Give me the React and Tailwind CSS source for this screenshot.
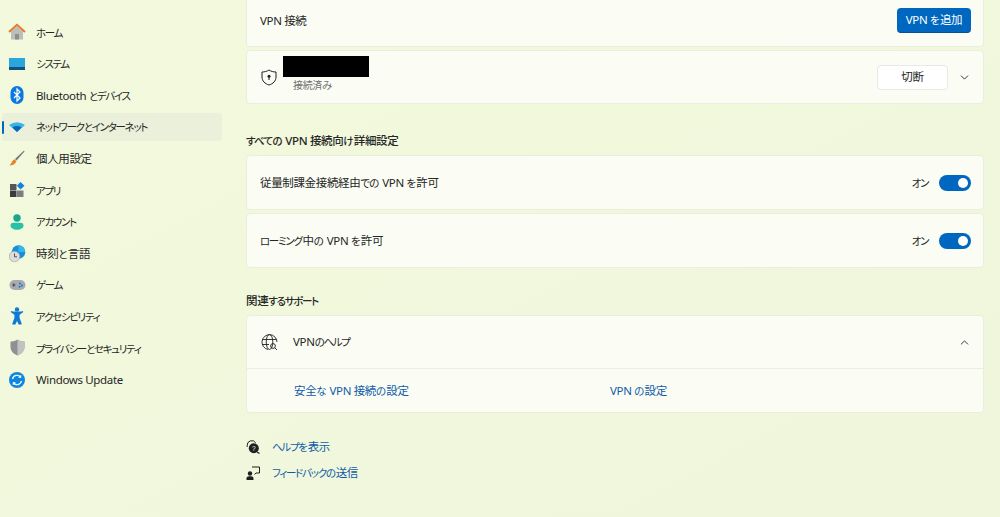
import { ChevronDown, ChevronUp } from 'lucide-react'

const HomeIcon = () => (
  <svg width="18" height="18" viewBox="0 0 18 18">
    <path d="M3 8.5V16.5H15V8.5L9 3.5Z" fill="#bdbdba" />
    <rect x="7" y="11" width="4" height="5.5" fill="#8d8d8a" />
    <path d="M1 9L9 1.8L17 9" fill="none" stroke="#e8792b" strokeWidth="2" />
  </svg>
)
const SystemIcon = () => (
  <svg width="16" height="12" viewBox="0 0 16 12">
    <rect width="16" height="9" y="0" fill="#2aa6dc" />
    <rect width="16" height="3" y="9" fill="#11507f" />
  </svg>
)
const BluetoothIcon = () => (
  <svg width="14" height="18" viewBox="0 0 14 18">
    <rect width="13" height="18" x="0.5" rx="6.5" fill="#0a78e0" />
    <path d="M4 6L10 12L7 15V3L10 6L4 12" fill="none" stroke="#fff" strokeWidth="1.2" />
  </svg>
)
const WifiIcon = () => (
  <svg width="16" height="10" viewBox="0 0 16 10">
    <path d="M0 3Q8 -2.5 16 3L8 10Z" fill="#35b4ea" />
    <path d="M3.4 5.4Q8 2.6 12.6 5.4L8 10Z" fill="#0a64b8" />
  </svg>
)
const BrushIcon = () => (
  <svg width="16" height="16" viewBox="0 0 16 16">
    <path d="M15 0.5L6 9L7.5 10.5L15.5 1.5Z" fill="#77777a" />
    <path d="M5.5 9.3L7.5 11.2C6.5 14 3.5 15.5 0.5 15.5C2.5 14 2.5 11 5.5 9.3Z" fill="#ee8022" />
  </svg>
)
const AppsIcon = () => (
  <svg width="15" height="15" viewBox="0 0 15 15">
    <rect x="0" y="2" width="6.5" height="6" fill="#54565a" />
    <rect x="0" y="8.5" width="6.5" height="6.5" fill="#3a3b3e" />
    <rect x="7" y="8.5" width="6.5" height="6.5" fill="#7b7d80" />
    <path d="M10.5 0L14.5 3.8L10.5 7.6L6.8 3.8Z" fill="#1282de" />
  </svg>
)
const AccountIcon = () => (
  <svg width="14" height="16" viewBox="0 0 14 16">
    <circle cx="7" cy="4" r="3.7" fill="#16a78f" />
    <path d="M0.5 11.5C0.5 9.5 2 8.8 3.5 8.8H10.5C12 8.8 13.5 9.5 13.5 11.5C13.5 14 10.5 15.8 7 15.8C3.5 15.8 0.5 14 0.5 11.5Z" fill="#27c2a6" />
  </svg>
)
const TimeIcon = () => (
  <svg width="17" height="17" viewBox="0 0 17 17">
    <circle cx="9.5" cy="7" r="6.8" fill="#1590d8" />
    <path d="M9.5 0.2A6.8 6.8 0 0 1 16.3 7H9.5Z" fill="#38b6e8" />
    <circle cx="5.5" cy="11.5" r="5.3" fill="#dcdcdc" stroke="#9a9a9a" strokeWidth="0.6" />
    <path d="M5.5 8.5V11.8H8" fill="none" stroke="#444" strokeWidth="0.9" />
  </svg>
)
const GameIcon = () => (
  <svg width="17" height="12" viewBox="0 0 17 12">
    <rect x="0.5" y="1" width="16" height="10" rx="5" fill="#a9abb1" />
    <path d="M3.2 6H6.4M4.8 4.4V7.6" stroke="#3f4145" strokeWidth="1" />
    <circle cx="11" cy="4.4" r="1" fill="#1478d4" />
    <circle cx="13" cy="6.6" r="1" fill="#1478d4" />
    <circle cx="10.6" cy="7.8" r="1" fill="#1478d4" />
  </svg>
)
const AccessIcon = () => (
  <svg width="14" height="18" viewBox="0 0 14 18">
    <circle cx="7" cy="2.4" r="2.2" fill="#0f7ad6" />
    <path d="M1 4.5L5 7.5V11L2.8 17H5L7 12.6L9 17H11.2L9 11V7.5L13 4.5" fill="#0f7ad6" stroke="#0f7ad6" strokeWidth="1.1" strokeLinejoin="round" />
  </svg>
)
const ShieldIcon = () => (
  <svg width="15" height="17" viewBox="0 0 15 17">
    <path d="M7.5 0.5C9.5 2 12 2.6 14.5 2.6V8C14.5 12 11.5 15 7.5 16.5C3.5 15 0.5 12 0.5 8V2.6C3 2.6 5.5 2 7.5 0.5Z" fill="#8e9094" />
    <path d="M7.5 0.5C9.5 2 12 2.6 14.5 2.6V8C14.5 12 11.5 15 7.5 16.5Z" fill="#c0c2c4" />
  </svg>
)
const UpdateIcon = () => (
  <svg width="16" height="16" viewBox="0 0 16 16">
    <circle cx="8" cy="8" r="8" fill="#0f86e0" />
    <path d="M3.6 7A4.5 4.5 0 0 1 11.5 5M12.4 9A4.5 4.5 0 0 1 4.5 11" fill="none" stroke="#fff" strokeWidth="1.3" />
    <path d="M12.2 2.8V5.8H9.2ZM3.8 13.2V10.2H6.8Z" fill="#fff" />
  </svg>
)
const VpnShield = () => (
  <svg width="16" height="17" viewBox="0 0 16 17" fill="none" stroke="#1f1f1f" strokeWidth="1">
    <path d="M8 1C10 2.4 12.5 3 15 3V8C15 12 12 14.8 8 16C4 14.8 1 12 1 8V3C3.5 3 6 2.4 8 1Z" />
    <circle cx="8" cy="7.2" r="1.5" fill="#1f1f1f" stroke="none" />
    <path d="M8 8V11" />
  </svg>
)
const GlobeSearch = () => (
  <svg width="17" height="17" viewBox="0 0 17 17" fill="none" stroke="#1f1f1f" strokeWidth="0.9">
    <path d="M7 15.5A7.5 7.5 0 1 1 16 8" />
    <ellipse cx="8.5" cy="8" rx="3.3" ry="7.5" />
    <path d="M1.5 5.5H15.5M1 10.5H8" />
    <circle cx="12" cy="12" r="2.4" />
    <path d="M13.8 13.8L16 16" />
  </svg>
)
const HelpIcon = () => (
  <svg width="14" height="14" viewBox="0 0 14 14">
    <path d="M1.2 7V5.5A4.6 4.6 0 0 1 9.8 3" fill="none" stroke="#1f1f1f" strokeWidth="1" />
    <circle cx="7.8" cy="8.3" r="5" fill="#1f1f1f" />
    <path d="M11 12L13.5 13.5" stroke="#1f1f1f" strokeWidth="1.2" />
    <text x="7.8" y="10.7" fontSize="6.5" fill="#fff" textAnchor="middle" fontFamily="Liberation Sans">?</text>
  </svg>
)
const FeedbackIcon = () => (
  <svg width="14" height="14" viewBox="0 0 14 14">
    <path d="M6 1H13.5V7H10L8.5 8.5" fill="none" stroke="#1f1f1f" strokeWidth="1" />
    <circle cx="4" cy="7.5" r="2.2" fill="#1f1f1f" />
    <path d="M0.5 14V12.5C0.5 11 1.6 10.3 3 10.3H5C6.4 10.3 7.5 11 7.5 12.5V14Z" fill="#1f1f1f" />
  </svg>
)

// kana in the reference is far narrower than Noto's, so squeeze those runs only
function Jp({ children }) {
  const parts = children.split(/([\u3040-\u30ff]+)/)
  return (
    <>
      {parts.map((p, i) => {
        if (/[\u30a0-\u30ff]/.test(p)) return <span key={i} className="text-[10.5px] tracking-[-1.3px] pr-[1px]">{p}</span>
        if (/[\u3040-\u309f]/.test(p)) return <span key={i} className="text-[10.5px] tracking-[-0.8px] pr-[1px]">{p}</span>
        return <span key={i} className="tracking-[-0.35px]">{p}</span>
      })}
    </>
  )
}

const navItems = [
  { label: 'ホーム', icon: <HomeIcon /> },
  { label: 'システム', icon: <SystemIcon /> },
  { label: 'Bluetooth とデバイス', icon: <BluetoothIcon /> },
  { label: 'ネットワークとインターネット', icon: <WifiIcon />, active: true },
  { label: '個人用設定', icon: <BrushIcon /> },
  { label: 'アプリ', icon: <AppsIcon /> },
  { label: 'アカウント', icon: <AccountIcon /> },
  { label: '時刻と言語', icon: <TimeIcon /> },
  { label: 'ゲーム', icon: <GameIcon /> },
  { label: 'アクセシビリティ', icon: <AccessIcon /> },
  { label: 'プライバシーとセキュリティ', icon: <ShieldIcon /> },
  { label: 'Windows Update', icon: <UpdateIcon /> },
]

function Toggle() {
  return (
    <div className="flex items-center gap-[10px]">
      <span><Jp>オン</Jp></span>
      <div className="w-[32px] h-[16px] rounded-full bg-[#0067c0] flex items-center justify-end pr-[3px]">
        <div className="w-[10px] h-[10px] rounded-full bg-white" />
      </div>
    </div>
  )
}

const card = 'bg-[#fbfdf4] border border-[#e9eedd] rounded-[4px]'

export default function App() {
  return (
    <div className="w-[1000px] h-[517px] overflow-hidden flex bg-gradient-to-br from-[#f2f9dc] to-[#eff6dc] text-[#262626] text-[11.5px] [font-family:'Noto_Sans','Noto_Sans_CJK_JP',sans-serif] [font-feature-settings:'palt']">
      {/* sidebar */}
      <div className="w-[246px] shrink-0 pt-[18px] pl-[2px] flex flex-col gap-[3.6px]">
        {navItems.map(item => (
          <div key={item.label} className={`relative w-[220px] h-[28px] shrink-0 flex items-center rounded-[4px] ${item.active ? 'bg-[#eaf0da]' : ''}`}>
            {item.active && <div className="absolute left-0 top-[8px] w-[2px] h-[13px] rounded-full bg-[#0067c0]" />}
            <div className="w-[30px] flex justify-center shrink-0">{item.icon}</div>
            <span className="ml-[4px] mt-[1px]"><Jp>{item.label}</Jp></span>
          </div>
        ))}
      </div>

      {/* content */}
      <div className="w-[738px] flex flex-col">
        <div className={`${card} border-t-0 rounded-t-none h-[47px] pb-[5px] shrink-0 flex items-center justify-between pl-[13px] pr-[12px]`}>
          <span><Jp>VPN 接続</Jp></span>
          <button className="w-[74px] h-[25px] rounded-[4px] bg-[#0067c0] text-white border-b border-[#0a4f90]"><Jp>VPN を追加</Jp></button>
        </div>
        <div className={`${card} mt-[3px] h-[54px] shrink-0 flex items-center pl-[14px] pr-[12px]`}>
          <VpnShield />
          <div className="ml-[6px] flex flex-col mt-[-4px]">
            <div className="w-[86px] h-[21px] bg-black" />
            <span className="ml-[10px] mt-[1px] text-[10px] text-[#707070]"><Jp>接続済み</Jp></span>
          </div>
          <button className="ml-auto w-[71px] h-[25px] rounded-[4px] bg-white border border-[#e8e8e4]"><Jp>切断</Jp></button>
          <ChevronDown className="ml-[10px]" size={13} strokeWidth={1.8} color="#333" />
        </div>

        <h2 className="mt-[28px] h-[18px] leading-[18px] font-medium"><Jp>すべての VPN 接続向け詳細設定</Jp></h2>
        <div className={`${card} mt-[5px] h-[55px] shrink-0 flex items-center justify-between pl-[13px] pr-[12px]`}>
          <span><Jp>従量制課金接続経由での VPN を許可</Jp></span>
          <Toggle />
        </div>
        <div className={`${card} mt-[3px] h-[55px] shrink-0 flex items-center justify-between pl-[13px] pr-[12px]`}>
          <span><Jp>ローミング中の VPN を許可</Jp></span>
          <Toggle />
        </div>

        <h2 className="mt-[24px] h-[18px] leading-[18px] font-medium"><Jp>関連するサポート</Jp></h2>
        <div className={`${card} mt-[5px] h-[98px] shrink-0 flex flex-col`}>
          <div className="h-[53px] shrink-0 flex items-center pl-[14px] pr-[12px] border-b border-[#e9eedd]">
            <GlobeSearch />
            <span className="ml-[15px]"><Jp>VPNのヘルプ</Jp></span>
            <ChevronUp className="ml-auto" size={13} strokeWidth={1.8} color="#333" />
          </div>
          <div className="flex-1 flex items-center text-[#0f5ba8]">
            <a className="ml-[47px] w-[316px]"><Jp>安全な VPN 接続の設定</Jp></a>
            <a><Jp>VPN の設定</Jp></a>
          </div>
        </div>

        <div className="mt-[25px] flex items-center h-[18px]">
          <HelpIcon />
          <a className="ml-[12px] text-[#0f5ba8]"><Jp>ヘルプを表示</Jp></a>
        </div>
        <div className="mt-[8px] flex items-center h-[18px]">
          <FeedbackIcon />
          <a className="ml-[12px] text-[#0f5ba8]"><Jp>フィードバックの送信</Jp></a>
        </div>
      </div>
    </div>
  )
}
